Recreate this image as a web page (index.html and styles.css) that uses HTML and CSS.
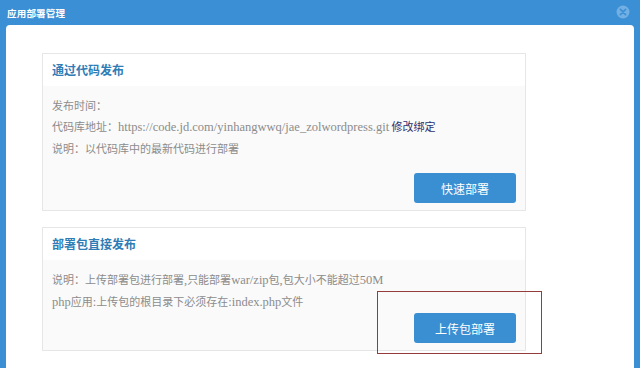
FILE: index.html
```html
<!DOCTYPE html>
<html lang="zh-CN">
<head>
    <meta charset="UTF-8">
    <meta name="viewport" content="width=device-width, initial-scale=1.0">
    <title>应用部署管理</title>
    <link rel="stylesheet" href="styles.css">
</head>
<body>
    <div class="dialog">
        <div class="dialog-header">
            <span class="dialog-title">应用部署管理</span>
            <span class="dialog-close">
                <svg width="14" height="14" viewBox="0 0 14 14">
                    <circle cx="7" cy="7" r="6.5" fill="#72afe4"/>
                    <path d="M4.4 4.4 L9.6 9.6 M9.6 4.4 L4.4 9.6" stroke="#3b8fd4" stroke-width="1.6" stroke-linecap="round"/>
                </svg>
            </span>
        </div>
        <div class="dialog-body">
            <div class="deploy-card">
                <div class="card-title">通过代码发布</div>
                <div class="card-body">
                    <p>发布时间：</p>
                    <p>代码库地址：<span class="latin">https://code.jd.com/yinhangwwq/jae_zolwordpress.git</span> <a href="#">修改绑定</a></p>
                    <p>说明：以代码库中的最新代码进行部署</p>
                    <div class="card-actions spaced">
                        <button type="button">快速部署</button>
                    </div>
                </div>
            </div>
            <div class="deploy-card">
                <div class="card-title">部署包直接发布</div>
                <div class="card-body">
                    <p>说明：上传部署包进行部署<span class="latin">,</span>只能部署<span class="latin">war/zip</span>包<span class="latin">,</span>包大小不能超过<span class="latin">50M</span></p>
                    <p><span class="latin">php</span>应用<span class="latin">:</span>上传包的根目录下必须存在<span class="latin">:index.php</span>文件</p>
                    <div class="card-actions">
                        <button type="button">上传包部署</button>
                    </div>
                </div>
                <!-- 注釈の赤枠 -->
                <div class="highlight-box"></div>
            </div>
        </div>
    </div>
</body>
</html>
```

FILE: styles.css
```css
body {
    margin: 0;
    background-color: #3b8fd4;
    font-family: "Liberation Serif", "Noto Sans CJK SC", serif;
    font-size: 12px;
    overflow: hidden;
}
.dialog {
    display: flex;
    flex-direction: column;
    height: 368px;
}
.dialog-header {
    height: 25px;
    padding: 0 10px 0 7px;
    display: flex;
    align-items: center;
    justify-content: space-between;
}
.dialog-title {
    color: #ffffff;
    font-family: "Noto Sans CJK SC", sans-serif;
    font-size: 9.5px;
    font-weight: bold;
    letter-spacing: 0.2px;
}
.dialog-close {
    display: flex;
    margin-top: -1px;
}
.dialog-body {
    flex: 1;
    margin: 0 6px;
    background-color: #ffffff;
    border-radius: 4px 4px 0 0;
    padding: 28px 0 0 36px;
}
.deploy-card {
    position: relative;
    width: 484px;
    box-sizing: border-box;
    border: 1px solid #e6e6e6;
    margin-bottom: 16px;
}
.card-title {
    height: 32px;
    line-height: 32px;
    padding: 0 9px;
    color: #2f7db6;
    font-family: "Noto Sans CJK SC", sans-serif;
    font-size: 12px;
    font-weight: bold;
    background-color: #ffffff;
}
.card-body {
    background-color: #fafafa;
    padding: 9px 9px 7px;
    color: #8c8c8c;
    font-family: "Noto Sans CJK SC", sans-serif;
    font-size: 11px;
}
.card-body p {
    margin: 0;
    line-height: 21px;
}
.card-body .latin {
    font-family: "Liberation Serif", serif;
    font-size: 12.5px;
}
.card-body a {
    color: #2c2f6e;
    text-decoration: none;
}
.card-actions {
    display: flex;
    justify-content: flex-end;
}
.card-actions.spaced {
    margin-top: 14px;
}
.card-actions button {
    width: 102px;
    height: 30px;
    border: none;
    border-radius: 3px;
    background-color: #3a8fd2;
    color: #ffffff;
    font-family: "Noto Sans CJK SC", sans-serif;
    font-size: 12px;
    cursor: pointer;
}
/* 赤い注釈枠 */
.highlight-box {
    position: absolute;
    left: 334px;
    top: 63px;
    width: 165px;
    height: 63px;
    border: 1px solid #933c3c;
    box-sizing: border-box;
}
```
